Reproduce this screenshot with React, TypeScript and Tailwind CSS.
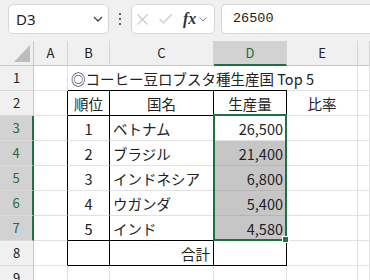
import React from 'react';

// border helpers: g = gridline, k = black table rule, n = none
const R: Record<string, string> = {
  g: 'border-r border-r-[#e1e1e1]',
  k: 'border-r border-r-black',
  n: '',
};
const B: Record<string, string> = {
  g: 'border-b border-b-[#e1e1e1]',
  k: 'border-b border-b-black',
  s: 'border-b border-b-[#b6b6b6]',
  n: '',
};

function Cell({
  r = 'g',
  b = 'g',
  align = 'left',
  className = '',
  children,
}: {
  r?: string;
  b?: string;
  align?: 'left' | 'center' | 'right';
  className?: string;
  children?: React.ReactNode;
}) {
  const a =
    align === 'center' ? 'justify-center' : align === 'right' ? 'justify-end pr-[3px]' : 'justify-start pl-[3px]';
  return (
    <div className={`flex items-center pt-[2px] whitespace-nowrap ${a} ${R[r]} ${B[b]} ${className}`}>
      {children}
    </div>
  );
}

function ColHead({ label, active = false }: { label: string; active?: boolean }) {
  return (
    <div
      className={`flex items-center justify-center border-r border-r-[#d4d4d4] text-[13px] ${
        active
          ? 'bg-[#d2d2d2] text-[#1e6b41] border-b-2 border-b-[#1e7145]'
          : 'bg-[#f0f0f0] text-[#222] border-b border-b-[#c8c8c8]'
      }`}
    >
      {label}
    </div>
  );
}

function RowHead({ n, active = false }: { n: number; active?: boolean }) {
  return (
    <div
      className={`flex items-center justify-center text-[13px] border-b border-b-[#dadada] ${
        active
          ? 'bg-[#d2d2d2] text-[#1e6b41] border-r-2 border-r-[#1e7145]'
          : 'bg-[#f0f0f0] text-[#222] border-r border-r-[#c8c8c8]'
      }`}
    >
      {n}
    </div>
  );
}

const rows = [
  { rank: 1, name: 'ベトナム', amount: '26,500' },
  { rank: 2, name: 'ブラジル', amount: '21,400' },
  { rank: 3, name: 'インドネシア', amount: '6,800' },
  { rank: 4, name: 'ウガンダ', amount: '5,400' },
  { rank: 5, name: 'インド', amount: '4,580' },
];

export default function App() {
  return (
    <div className="w-[370px] h-[280px] overflow-hidden bg-white font-['Noto_Sans',sans-serif] text-[#222]">
      {/* formula bar */}
      <div className="flex items-start h-[41px] bg-[#f0f0f0] pt-[4px] pl-[8px] overflow-hidden">
        <div className="w-[101px] h-[30px] shrink-0 rounded-[5px] border border-[#d6d6d6] bg-white flex items-center justify-between pl-[7px] pr-[5px]">
          <span className="text-[15px] text-[#222]">D3</span>
          <svg width="10" height="6" viewBox="0 0 10 6" fill="none">
            <path d="M1 1l4 4 4-4" stroke="#444" strokeWidth="1.3" />
          </svg>
        </div>
        <div className="w-[22px] h-[30px] shrink-0 flex flex-col items-center justify-center gap-[2.5px]">
          <span className="w-[2.5px] h-[2.5px] rounded-full bg-[#333]" />
          <span className="w-[2.5px] h-[2.5px] rounded-full bg-[#333]" />
          <span className="w-[2.5px] h-[2.5px] rounded-full bg-[#333]" />
        </div>
        <div className="w-[84px] h-[30px] shrink-0 rounded-[5px] border border-[#d6d6d6] bg-white flex items-center pl-[5px] gap-[11px]">
          <svg width="11" height="11" viewBox="0 0 11 11" fill="none">
            <path d="M0.5 0.5l10 10M10.5 0.5l-10 10" stroke="#c8c8c8" strokeWidth="1.1" />
          </svg>
          <svg width="13" height="10" viewBox="0 0 13 10" fill="none">
            <path d="M0.5 5l4 4 8-8.5" stroke="#c8c8c8" strokeWidth="1.1" />
          </svg>
          <div className="flex items-center gap-[3px]">
            <span className="font-['Liberation_Serif',serif] italic font-bold text-[16px] leading-none text-[#333]">
              fx
            </span>
            <svg width="8" height="5" viewBox="0 0 8 5" fill="none">
              <path d="M0.5 0.5l3.5 3.5 3.5-3.5" stroke="#888" strokeWidth="1" />
            </svg>
          </div>
        </div>
        <div className="ml-[6px] w-[170px] h-[30px] shrink-0 rounded-[5px] border border-[#d6d6d6] bg-white flex items-center pl-[11px]">
          <span className="font-['Liberation_Mono',monospace] text-[13.5px] text-[#222]">26500</span>
        </div>
      </div>

      {/* sheet */}
      <div className="relative grid grid-cols-[34px_34px_42px_104px_73px_71px_1fr] auto-rows-[25px] font-['Noto_Sans_CJK_JP',sans-serif] text-[14.5px] text-[#222]">
        {/* column headers */}
        <div className="relative bg-[#f0f0f0] border-r border-r-[#c8c8c8] border-b border-b-[#c8c8c8]">
          <svg className="absolute right-[3px] bottom-[3px]" width="16" height="17" viewBox="0 0 16 17">
            <path d="M16 0V17H0Z" fill="#bdbdbd" />
          </svg>
        </div>
        <ColHead label="A" />
        <ColHead label="B" />
        <ColHead label="C" />
        <ColHead label="D" active />
        <ColHead label="E" />
        <ColHead label="" />

        {/* row 1 */}
        <RowHead n={1} />
        <Cell />
        <Cell r="n" b="k" className="overflow-visible">
          ◎コーヒー豆ロブスタ種生産国 Top 5
        </Cell>
        <Cell r="n" b="k" />
        <Cell r="n" b="k" />
        <Cell />
        <Cell />

        {/* row 2 */}
        <RowHead n={2} />
        <Cell r="k" />
        <Cell r="k" b="k" align="center">順位</Cell>
        <Cell r="k" b="k" align="center">国名</Cell>
        <Cell r="k" b="k" align="center">生産量</Cell>
        <Cell align="center">比率</Cell>
        <Cell />

        {/* data rows */}
        {rows.map((row, i) => {
          const last = i === rows.length - 1;
          const edge = last ? 'k' : 'g';
          return (
            <React.Fragment key={row.rank}>
              <RowHead n={i + 3} active />
              <Cell r="k" />
              <Cell r="k" b={edge} align="center">{row.rank}</Cell>
              <Cell r="k" b={edge}>{row.name}</Cell>
              <Cell
                r="k"
                b={last ? 'k' : i === 0 ? 'g' : 's'}
                align="right"
                className={i === 0 ? '' : 'bg-[#c6c6c6]'}
              >
                {row.amount}
              </Cell>
              <Cell />
              <Cell />
            </React.Fragment>
          );
        })}

        {/* row 8 */}
        <RowHead n={8} />
        <Cell r="k" />
        <Cell r="k" b="k" />
        <Cell r="k" b="k" align="right">合計</Cell>
        <Cell r="k" b="k" />
        <Cell />
        <Cell />

        {/* row 9 */}
        <RowHead n={9} />
        <Cell />
        <Cell />
        <Cell />
        <Cell />
        <Cell />
        <Cell />

        {/* selection D3:D7 */}
        <div className="absolute left-[213px] top-[73px] w-[74px] h-[127px] border-2 border-[#1e7145] pointer-events-none" />
        <div className="absolute left-[282px] top-[195px] w-[7px] h-[7px] bg-[#1e7145] border border-white" />
      </div>
    </div>
  );
}
